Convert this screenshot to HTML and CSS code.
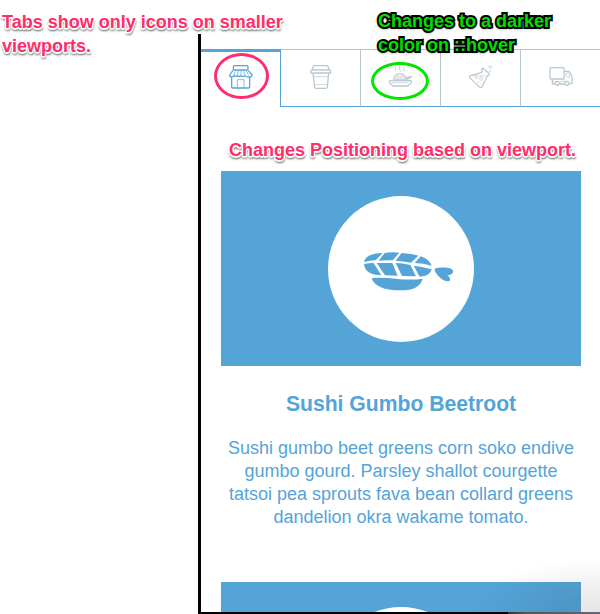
FILE: index.html
```html
<!DOCTYPE html>
<html lang="en">
<head>
<meta charset="utf-8">
<title>Responsive tabs</title>
<link rel="stylesheet" href="styles.css">
</head>
<body>
<main class="frame">
  <nav class="tabs">
    <a class="tab active"><svg viewBox="117 75 72 72"><rect x="130" y="77" width="44" height="13" rx="3"/><path d="M129 91L119 105Q119 111 125 111Q131 111 133 106Q137 112 143 107Q149 112 154 107Q160 112 165 107Q170 112 177 111Q186 111 186 105L175 91M125 111V141Q125 144 129 144H176Q179 144 179 141V111"/><path class="fine" d="M136 92L131 106M145 92L142 107M153 92V107M161 92L165 107M169 92L176 106M142 142V119H162V142"/></svg></a>
    <a class="tab"><svg viewBox="57 75 72 72"><path d="M71 77H113L118 90H66ZM65 90H119Q122 90 122 95V99H63V94Q63 90 65 90ZM69 100L74 142Q74 145 78 145H107Q111 145 112 142L116 100"/><path class="fine" d="M71 110H114M74 134H111"/></svg></a>
    <a class="tab"><svg viewBox="297 75 72 72"><path d="M299 122H363L365 127L354 138H309L298 127ZM345 114L365 109M349 119L364 111"/><path class="fine" d="M305 128H356M309 119Q312 101 330 100Q348 101 350 119ZM313 112L320 119M316 107L329 119M322 103L339 119M329 100L348 118M337 102L349 112M347 110L339 119M344 105L330 119M338 102L321 119M330 100L312 118M323 102L313 112M317 79Q313 86 318 94M330 76Q326 84 331 95M343 80Q339 86 343 93"/></svg></a>
    <a class="tab"><svg viewBox="87 75 72 72"><path d="M125 87L129 85L148 101L147 106L142 107L126 141Q121 145 117 140L89 113Q88 108 94 106L124 98L127 93Z"/><path class="fine" d="M97 107Q117 107 135 108"/><circle class="fine" cx="109" cy="113" r="3"/><circle class="fine" cx="123" cy="116" r="4.5"/><circle class="fine" cx="116" cy="126" r="1"/><circle class="fine" cx="151" cy="81" r="4"/><circle class="fine" cx="150" cy="93" r="1.5"/></svg></a>
    <a class="tab"><svg viewBox="327 75 72 72"><rect x="330" y="83" width="42" height="34" rx="3"/><path d="M373 94H385Q389 94 391 99L396 110V131H388M374 132H360M344 132H337V119"/><path class="fine" d="M337 125H344M360 125H373V118M389 112H383Q377 110 377 99H386Z"/><circle cx="352" cy="130" r="6"/><circle cx="381" cy="130" r="6"/></svg></a>
  </nav>
  <section class="card">
    <div class="hero"><div class="disc">
      <svg viewBox="24 18 438 438">
        <path d="M132 216C136 198 158 189 188 189L168 210Q150 212 132 216ZM194 189Q215 185 238 188L218 211Q196 210 176 212L178 209ZM245 189Q275 191 295 197L273 218Q250 213 227 212ZM302 199Q329 209 335 227Q310 220 284 219ZM132 222Q146 219 161 219L184 256Q135 255 132 222ZM170 219H217L233 257Q214 256 195 256ZM227 219Q247 219 271 225L288 259L246 258ZM281 227Q310 231 335 238Q330 259 299 260ZM155 264Q190 262 226 266Q274 271 308 266C300 292 276 302 240 301C192 301 163 289 155 264ZM346 235C360 232 379 232 393 236C406 243 398 255 382 256Q394 264 389 273C373 279 352 258 345 244Q343 238 346 235Z"/>
      </svg>
    </div></div>
    <h2>Sushi Gumbo Beetroot</h2>
    <p>Sushi gumbo beet greens corn soko endive gumbo gourd. Parsley shallot courgette tatsoi pea sprouts fava bean collard greens dandelion okra wakame tomato.</p>
  </section>
  <section class="card"><div class="hero"><div class="disc"></div></div></section>
</main>
<div class="shade"></div>
<div class="note pink note-tabs">Tabs show only icons on smaller<br>viewports.</div>
<div class="note green note-hover">Changes to a darker<br>color on ::hover</div>
<div class="note pink note-position">Changes Positioning based on viewport.</div>
<div class="ring ring-pink"></div>
<div class="ring ring-green"></div>
</body>
</html>
```

FILE: styles.css
```css
* { box-sizing: border-box; }
body {
  display: flow-root;
  margin: 0;
  height: 614px;
  overflow: hidden;
  background: #fff;
  color: #54a4d8;
  font-family: "Liberation Sans", Arial, sans-serif;
}
.frame {
  height: 580px;
  margin: 34px 0 0 198px;
  padding-top: 15px;
  border-left: 3px solid #000;
  border-bottom: 2px solid #000;
  overflow: hidden;
}
.tabs { display: grid; grid-template-columns: repeat(5, 80px); height: 58px; }
.tab {
  padding-top: 15px;
  color: #b9c7d1;
  border-top: 1px solid #b9c7d1;
  border-right: 1px solid #b9c7d1;
  border-bottom: 1px solid #54a4d8;
}
.tab:last-child { border-right: 0; }
.tab.active {
  padding-top: 13px;
  color: #54a4d8;
  border-top: 3px solid #54a4d8;
  border-right-color: #54a4d8;
  border-bottom: 0;
}
.tab svg { display: block; width: 24px; height: 24px; margin: 0 0 0 28px; }
.tab path, .tab circle, .tab rect { fill: none; stroke: currentColor; stroke-width: 3.8; stroke-linejoin: round; }
.tab .fine { stroke-width: 2.2; }
.card { width: 360px; margin: 64px 0 0 20px; text-align: center; }
.card + .card { margin-top: 53px; }
.hero { height: 195px; padding-top: 25px; background: #54a4d8; }
.disc { width: 146px; height: 146px; margin: 0 auto; background: #fff; border-radius: 50%; }
.disc svg { display: block; width: 146px; height: 146px; fill: #54a4d8; }
h2 { margin: 25px 0 20px; font-size: 21.15px; line-height: 26px; }
p { margin: 0; font-size: 18px; line-height: 23px; }
.shade {
  position: absolute;
  right: 0;
  bottom: 0;
  width: 130px;
  height: 56px;
  background: radial-gradient(ellipse 100% 100% at 100% 100%, rgba(0, 0, 0, .11), rgba(0, 0, 0, .05) 55%, transparent 100%);
}
.shade::after {
  content: "";
  position: absolute;
  right: 0;
  bottom: 0;
  width: 92px;
  height: 2px;
  background: linear-gradient(90deg, #333, #555 20%, #667);
}
.note { position: absolute; font-size: 18px; font-weight: bold; line-height: 24px; white-space: nowrap; }
.pink {
  color: #ff2d6b;
  text-shadow:
    1px 0 #fff, -1px 0 #fff, 0 1px #fff, 0 -1px #fff,
    1px 1px #fff, -1px 1px #fff, 1px -1px #fff, -1px -1px #fff,
    0 2px 1px #fff,
    1px 3px 2px rgba(0, 0, 0, .5), -1px 3px 2px rgba(0, 0, 0, .3);
}
.green {
  color: #00df00;
  -webkit-text-stroke: 4px #000;
  stroke-linejoin: round;
  paint-order: stroke fill;
  text-shadow: 0 2px 3px rgba(0, 0, 0, .5);
}
.note-tabs { left: 2px; top: 10px; }
.note-hover { left: 378px; top: 9px; }
.note-position { left: 229px; top: 138px; }
.ring { position: absolute; border: 3px solid; border-radius: 50%; }
.ring-pink { left: 214px; top: 53px; width: 55px; height: 46px; border-color: #ff2d6b; }
.ring-green { left: 371px; top: 62px; width: 58px; height: 38px; border-color: #00e600; }
```
